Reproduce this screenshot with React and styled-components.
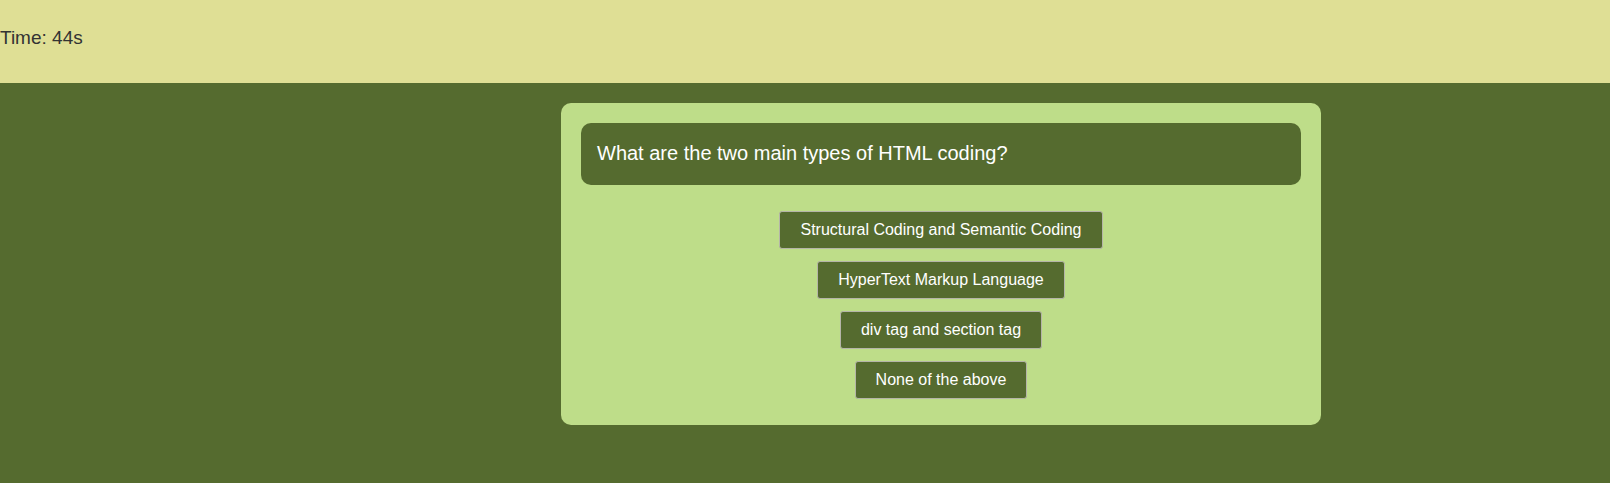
import styled, { createGlobalStyle } from 'styled-components';

const GlobalStyle = createGlobalStyle`
  html, body {
    margin: 0;
    padding: 0;
    min-height: 100%;
    background: #556b2f;
    font-family: "Liberation Sans", Arial, sans-serif;
  }
  #root {
    min-height: 100vh;
  }
`;

const Header = styled.header`
  height: 83px;
  background: #dfdf95;
  display: flex;
  align-items: center;
  color: #333;
  font-size: 19px;
  padding-bottom: 7px;
  box-sizing: border-box;
`;

const Main = styled.main`
  background: #556b2f;
  padding: 20px 0 30px 561px;
`;

const Card = styled.section`
  width: 760px;
  box-sizing: border-box;
  background: #bedd89;
  border-radius: 10px;
  padding: 20px 20px 26px;
  display: flex;
  flex-direction: column;
  align-items: center;
`;

const Question = styled.h2`
  align-self: stretch;
  margin: 0 0 26px;
  background: #556b2f;
  color: #fff;
  border-radius: 10px;
  padding: 18px 16px 20px;
  font-size: 20px;
  font-weight: normal;
  line-height: 24px;
`;

const Choices = styled.div`
  display: flex;
  flex-direction: column;
  align-items: center;
  gap: 12px;
`;

const Choice = styled.button`
  background: #556b2f;
  color: #fff;
  border: 1px solid #b5b5a8;
  border-radius: 3px;
  height: 38px;
  padding: 0 20px;
  font-family: "Liberation Sans", Arial, sans-serif;
  font-size: 16px;
  cursor: pointer;
`;

const answers = [
  'Structural Coding and Semantic Coding',
  'HyperText Markup Language',
  'div tag and section tag',
  'None of the above',
];

export default function App() {
  return (
    <>
      <GlobalStyle />
      <Header>Time: 44s</Header>
      <Main>
        <Card>
          <Question>What are the two main types of HTML coding?</Question>
          <Choices>
            {answers.map((a) => (
              <Choice key={a}>{a}</Choice>
            ))}
          </Choices>
        </Card>
      </Main>
    </>
  );
}
